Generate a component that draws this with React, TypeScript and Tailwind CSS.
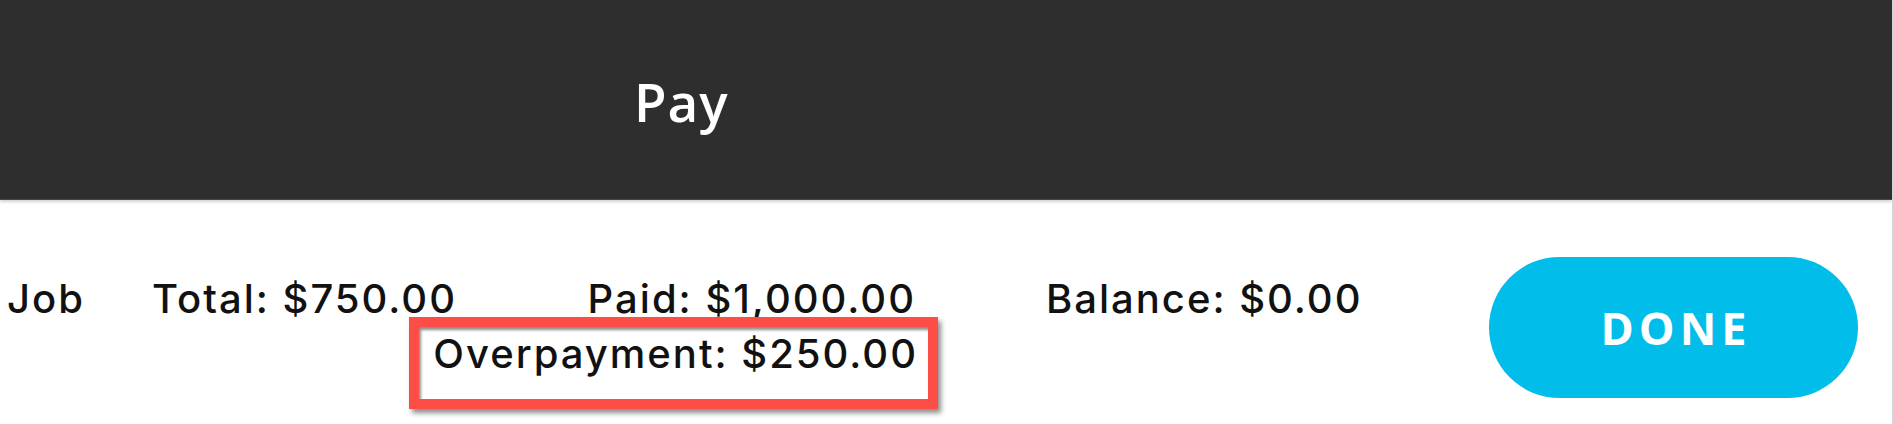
const FONT = "font-['Inter',sans-serif]";

function Header() {
  return (
    <header className="h-[200px] bg-[#2e2e2e] border-b border-[#474747] shadow-[0_2px_3px_rgba(0,0,0,0.18)] pl-[634px] pt-[75px]">
      <h1 className="font-['Open_Sans',sans-serif] text-[53px] leading-[53px] font-semibold tracking-[1px] text-white">
        Pay
      </h1>
    </header>
  );
}

function Summary() {
  return (
    <div className="flex items-start pt-[57px] text-[40px] leading-[41px] font-medium tracking-[2px] text-[#111] whitespace-nowrap">
      <div className="w-[152px] shrink-0 pl-[7px] mt-[21px]">Job</div>
      <div className="w-[437px] shrink-0 mt-[21px]">Total: $750.00</div>
      <div className="w-[327px] shrink-0 mt-[21px] flex flex-col items-end">
        <div>Paid: $1,000.00</div>
        <div className="-mr-[22px] -mt-[2px] border-[10px] border-[#fd4e46] pl-[14px] pr-[10px] pt-[6px] pb-[25px] shadow-[3px_4px_5px_rgba(0,0,0,0.45),inset_2px_3px_3px_rgba(0,0,0,0.45)]">
          Overpayment: $250.00
        </div>
      </div>
      <div className="ml-[130px] w-[443px] shrink-0 mt-[21px]">Balance: $0.00</div>
      <button className="font-['Open_Sans',sans-serif] w-[369px] h-[141px] shrink-0 rounded-full bg-[#00bee9] text-white text-[45px] font-bold tracking-[5px] leading-none pl-[5px]">
        DONE
      </button>
    </div>
  );
}

export default function App() {
  return (
    <div className={`${FONT} h-[424px] w-[1894px] bg-white border-r-2 border-[#d4d4d4] overflow-hidden`}>
      <Header />
      <Summary />
    </div>
  );
}
